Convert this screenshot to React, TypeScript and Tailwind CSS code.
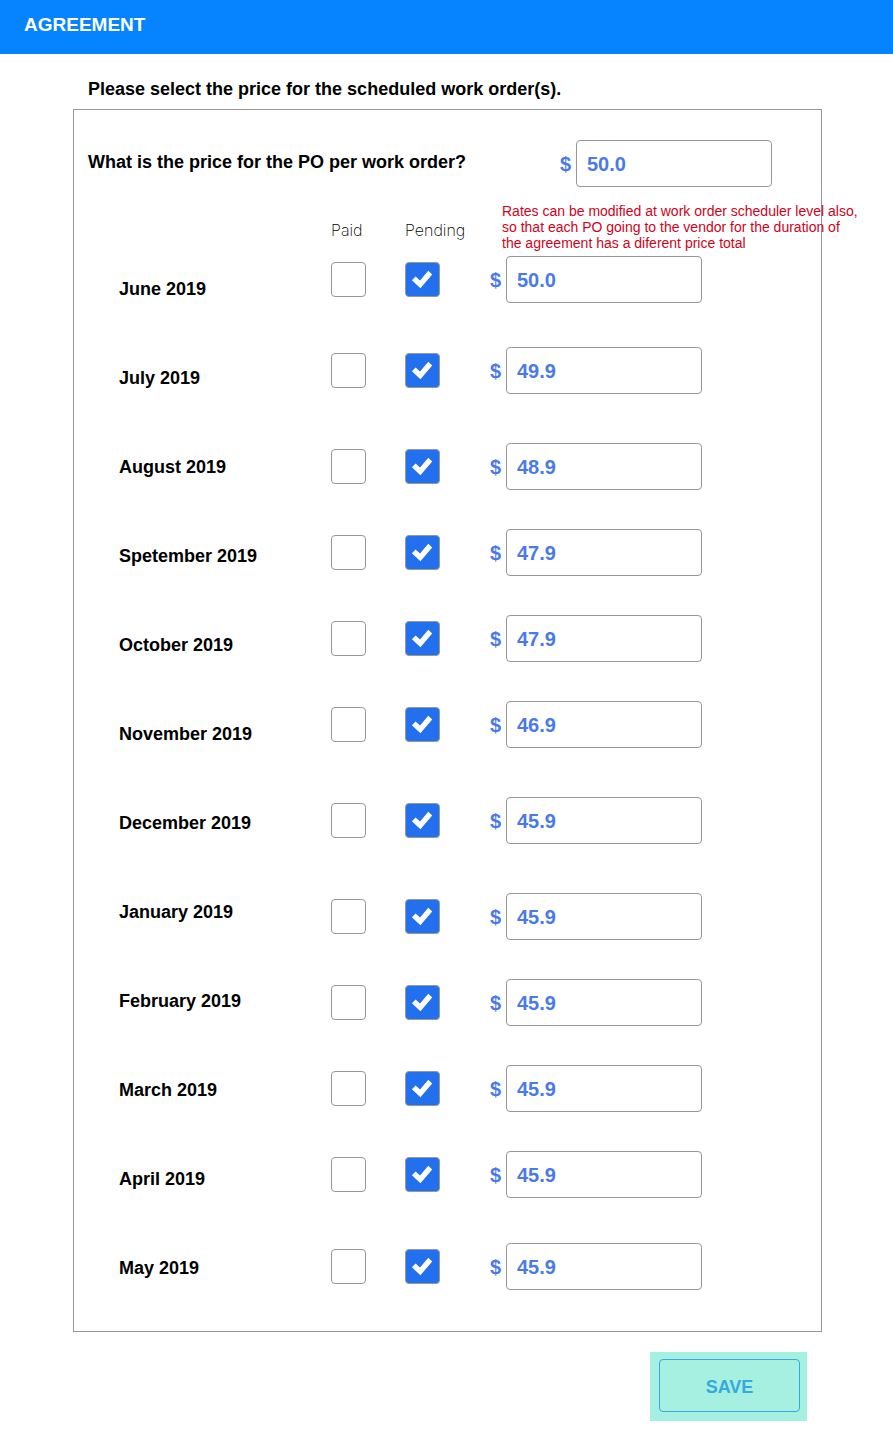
type Month = { id: string; name: string; price: string; space: string };

const months: Month[] = [
  { id: "jun", name: "June 2019", price: "50.0", space: "mb-[44px]" },
  { id: "jul", name: "July 2019", price: "49.9", space: "mb-[49px]" },
  { id: "aug", name: "August 2019", price: "48.9", space: "mb-[39px]" },
  { id: "sep", name: "Spetember 2019", price: "47.9", space: "mb-[39px]" },
  { id: "oct", name: "October 2019", price: "47.9", space: "mb-[39px]" },
  { id: "nov", name: "November 2019", price: "46.9", space: "mb-[49px]" },
  { id: "dec", name: "December 2019", price: "45.9", space: "mb-[49px]" },
  { id: "jan", name: "January 2019", price: "45.9", space: "mb-[39px]" },
  { id: "feb", name: "February 2019", price: "45.9", space: "mb-[39px]" },
  { id: "mar", name: "March 2019", price: "45.9", space: "mb-[39px]" },
  { id: "apr", name: "April 2019", price: "45.9", space: "mb-[45px]" },
  { id: "may", name: "May 2019", price: "45.9", space: "mb-0" },
];

function Check({ labelledBy, checked }: { labelledBy: string; checked?: boolean }) {
  return (
    <span className="grid h-[35px] w-[35px] shrink-0">
      <input
        type="checkbox"
        defaultChecked={checked}
        aria-labelledby={labelledBy}
        className="peer col-start-1 row-start-1 h-[35px] w-[35px] appearance-none rounded border border-[#979797] bg-white checked:bg-[#2370ee]"
      />
      <svg
        viewBox="0 0 35 35"
        aria-hidden="true"
        className="pointer-events-none invisible col-start-1 row-start-1 h-[35px] w-[35px] fill-white peer-checked:visible"
      >
        <path d="M6.9 18.3 L10.6 14.6 L15 18.6 L23.3 8.8 L27.2 12.4 L15.4 26.3 Z" />
      </svg>
    </span>
  );
}

function Price({ id, value }: { id: string; value: string }) {
  return (
    <div className="flex shrink-0 items-center text-[20px] font-bold text-[#4a7aea]">
      <span className="w-[17px] pl-px">$</span>
      <input
        id={id}
        type="text"
        inputMode="decimal"
        defaultValue={value}
        className="h-[47px] w-[196px] rounded border border-[#979797] bg-white px-[10px] pt-[2px] leading-[24px]"
      />
    </div>
  );
}

export default function App() {
  return (
    <div className="min-h-screen bg-white font-['Liberation_Sans',Arial,sans-serif] text-black">
      <header className="h-[54px] bg-[#0684ff] px-6 pt-[13px]">
        <h1 className="text-[19px] leading-[24px] font-bold text-white">AGREEMENT</h1>
      </header>

      <form className="pr-[71px] pb-[21px] pl-[73px]" onSubmit={(e) => e.preventDefault()}>
        <h2 className="pt-[23px] pb-2 pl-[15px] text-[18px] leading-[24px] font-bold">
          Please select the price for the scheduled work order(s).
        </h2>

        <section className="border border-[#979797] pt-[30px] pb-[41px]">
          <div className="flex items-center justify-between pr-[49px] pl-[14px]">
            <label htmlFor="po" className="pb-1 text-[18px] leading-[24px] font-bold">
              What is the price for the PO per work order?
            </label>
            <Price id="po" value="50.0" />
          </div>

          <div className="mt-4 mb-[5px] flex pl-[257px]">
            <span
              id="paid"
              className="w-[74px] shrink-0 pt-[15px] font-[Inter,sans-serif] text-[16px] leading-[24px] font-extralight"
            >
              Paid
            </span>
            <span
              id="pending"
              className="w-[97px] shrink-0 pt-[15px] font-[Inter,sans-serif] text-[16px] leading-[24px] font-extralight"
            >
              Pending
            </span>
            <p className="w-0 text-[14px] leading-[16px] whitespace-nowrap text-[#d0021b]">
              Rates can be modified at work order scheduler level also,
              <br />
              so that each PO going to the vendor for the duration of
              <br />
              the agreement has a diferent price total
            </p>
          </div>

          <div className="flex pl-[45px]">
            <div className="flex w-[212px] shrink-0 flex-col gap-[63px] pt-5">
              {months.map((m) => (
                <label
                  key={m.id}
                  id={`${m.id}-name`}
                  htmlFor={`${m.id}-price`}
                  className="text-[18px] leading-[26px] font-bold"
                >
                  {m.name}
                </label>
              ))}
            </div>
            <div>
              {months.map((m) => (
                <div key={m.id} className={`flex items-center ${m.space}`}>
                  <Check labelledBy={`${m.id}-name paid`} />
                  <span className="w-[39px]" />
                  <Check labelledBy={`${m.id}-name pending`} checked />
                  <span className="w-[49px]" />
                  <Price id={`${m.id}-price`} value={m.price} />
                </div>
              ))}
            </div>
          </div>
        </section>

        <div className="mt-5 mr-[15px] flex justify-end">
          <div className="bg-[#a6f0e1] pt-[7px] pr-[7px] pb-[9px] pl-[9px]">
            <button
              type="submit"
              className="h-[53px] w-[141px] rounded border border-[#37a9dc] pt-1 text-[18px] font-bold text-[#37a9dc]"
            >
              SAVE
            </button>
          </div>
        </div>
      </form>
    </div>
  );
}
